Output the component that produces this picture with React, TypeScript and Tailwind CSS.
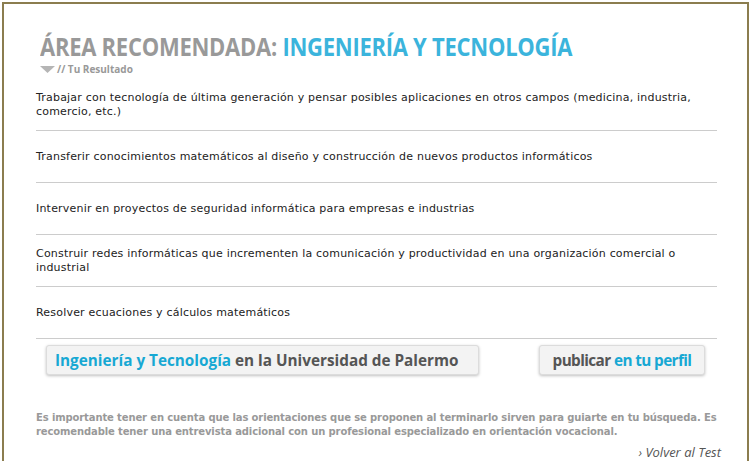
import React from "react";

const items = [
  "Trabajar con tecnología de última generación y pensar posibles aplicaciones en otros campos (medicina, industria, comercio, etc.)",
  "Transferir conocimientos matemáticos al diseño y construcción de nuevos productos informáticos",
  "Intervenir en proyectos de seguridad informática para empresas e industrias",
  "Construir redes informáticas que incrementen la comunicación y productividad en una organización comercial o industrial",
  "Resolver ecuaciones y cálculos matemáticos",
];

export default function App() {
  return (
    <div className="bg-white w-[751px] h-[461px] overflow-hidden pl-[2px] pt-[2px]">
      <div className="w-[747px] h-[480px] border-2 border-b-0 border-[#8b7d4f] pl-[32px] pr-[30px]">
        {/* header */}
        <div className="pt-[28px] pl-[4px]">
          <h1
            className="inline-block origin-left scale-x-[0.88] whitespace-nowrap text-[25px] leading-[28px] font-bold tracking-[-0.3px] text-[#999999]"
            style={{ fontFamily: '"Open Sans", "Liberation Sans", sans-serif' }}
          >
            ÁREA RECOMENDADA: <span className="text-[#3bb4dc]">INGENIERÍA Y TECNOLOGÍA</span>
          </h1>
          <div className="flex items-center gap-[2px] h-[12px] mt-[1px]">
            <svg width="15" height="7" viewBox="0 0 15 7">
              <polygon points="0,0 15,0 7.5,7" fill="#b5b5b5" />
            </svg>
            <span
              className="text-[10px] font-bold text-[#999999]"
              style={{ fontFamily: '"Open Sans", "Liberation Sans", sans-serif' }}
            >
              // Tu Resultado
            </span>
          </div>
        </div>

        {/* list */}
        <ul
          className="mt-[4px] text-[11px] leading-[14px] tracking-[0.2px] text-[#222222]"
          style={{ fontFamily: '"DejaVu Sans", Verdana, sans-serif' }}
        >
          {items.map((t) => (
            <li key={t} className="h-[52px] flex items-center border-b border-[#cccccc]">
              <span className="pr-[8px]">{t}</span>
            </li>
          ))}
        </ul>

        {/* buttons */}
        <div
          className="flex justify-between items-center mt-[6px] pl-[10px] pr-[12px] font-bold text-[15.3px]"
          style={{ fontFamily: '"Open Sans", "Liberation Sans", sans-serif' }}
        >
          <div className="w-[433px] h-[30px] flex items-center pl-[8px] bg-[#f3f3f3] border border-[#dcdcdc] rounded-[3px] shadow-[0_1px_3px_rgba(0,0,0,0.25)] text-[#555555]">
            <span className="text-[#17a8d3]">Ingeniería y Tecnología</span>&nbsp;en la Universidad de Palermo
          </div>
          <div className="w-[166px] h-[30px] flex items-center justify-center bg-[#f3f3f3] border border-[#dcdcdc] rounded-[3px] shadow-[0_1px_3px_rgba(0,0,0,0.25)] text-[#555555] tracking-[-0.6px]">
            publicar&nbsp;<span className="text-[#17a8d3]">en tu perfil</span>
          </div>
        </div>

        {/* note */}
        <p
          className="mt-[36px] text-[10px] leading-[14px] font-bold tracking-[-0.12px] text-[#999999]"
          style={{ fontFamily: '"DejaVu Sans", Verdana, sans-serif' }}
        >
          Es importante tener en cuenta que las orientaciones que se proponen al terminarlo sirven para guiarte en tu búsqueda. Es recomendable tener una entrevista adicional con un profesional especializado en orientación vocacional.
        </p>
        <div
          className="mt-[4px] text-right text-[13px] leading-[18px] italic text-[#555555]"
          style={{ fontFamily: '"Open Sans", "Liberation Sans", sans-serif' }}
        >
          <span className="mr-[-4px]">› Volver al Test</span>
        </div>
      </div>
    </div>
  );
}
